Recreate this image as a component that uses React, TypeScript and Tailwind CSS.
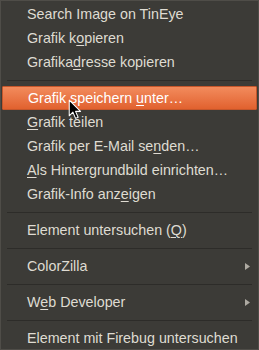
import React from 'react';

type Item =
  | { kind: 'sep' }
  | { kind: 'item'; label: string; mnemonic?: number; active?: boolean; submenu?: boolean };

const items: Item[] = [
  { kind: 'item', label: 'Search Image on TinEye' },
  { kind: 'item', label: 'Grafik kopieren', mnemonic: 8 },
  { kind: 'item', label: 'Grafikadresse kopieren', mnemonic: 7 },
  { kind: 'sep' },
  { kind: 'item', label: 'Grafik speichern unter…', mnemonic: 17, active: true },
  { kind: 'item', label: 'Grafik teilen', mnemonic: 0 },
  { kind: 'item', label: 'Grafik per E-Mail senden…', mnemonic: 20 },
  { kind: 'item', label: 'Als Hintergrundbild einrichten…', mnemonic: 0 },
  { kind: 'item', label: 'Grafik-Info anzeigen', mnemonic: 15 },
  { kind: 'sep' },
  { kind: 'item', label: 'Element untersuchen (Q)', mnemonic: 21 },
  { kind: 'sep' },
  { kind: 'item', label: 'ColorZilla', submenu: true },
  { kind: 'sep' },
  { kind: 'item', label: 'Web Developer', mnemonic: 1, submenu: true },
  { kind: 'sep' },
  { kind: 'item', label: 'Element mit Firebug untersuchen' },
];

// label with the access key underlined
const Label = ({ text, at }: { text: string; at?: number }) => {
  if (at === undefined) return <>{text}</>;
  return (
    <>
      {text.slice(0, at)}
      <span className="underline underline-offset-2 decoration-1">{text[at]}</span>
      {text.slice(at + 1)}
    </>
  );
};

const Cursor = () => (
  <svg
    className="absolute left-[67px] top-[98px] pointer-events-none"
    width="14"
    height="22"
    viewBox="0 0 13 21"
  >
    <path
      d="M1 1 L1 16 L4.5 12.5 L7 18.5 L9.5 17.5 L7 11.8 L11.8 11.8 Z"
      fill="#000"
      stroke="#fff"
      strokeWidth="1"
      strokeLinejoin="round"
    />
  </svg>
);

export default function App() {
  return (
    <div className="w-[259px] h-[350px] bg-[#3c3b37] border border-[#4f4d48] relative p-px font-['Liberation_Sans',Arial,sans-serif] text-[14.3px] text-[#dfdbd2] overflow-hidden">
      {items.map((it, i) =>
        it.kind === 'sep' ? (
          <div key={i} className="h-[12px] flex items-center px-[5px]">
            <div className="h-px w-full bg-[#2d2c29]" />
          </div>
        ) : (
          <div
            key={i}
            className={`h-[24px] flex items-center justify-between pl-[25px] pr-[6px] ${
              it.active
                ? 'bg-gradient-to-b from-[#f28b5c] to-[#e1612e] border border-[#c4562b] rounded-[1px] text-white pl-[24px]'
                : ''
            }`}
          >
            <span className="whitespace-nowrap leading-none">
              <Label text={it.label} at={it.mnemonic} />
            </span>
            {it.submenu && (
              <svg width="5" height="7" viewBox="0 0 5 7" className="mr-[1px]">
                <path d="M0 0 L5 3.5 L0 7 Z" fill="#aeaaa2" />
              </svg>
            )}
          </div>
        )
      )}
      <Cursor />
    </div>
  );
}
